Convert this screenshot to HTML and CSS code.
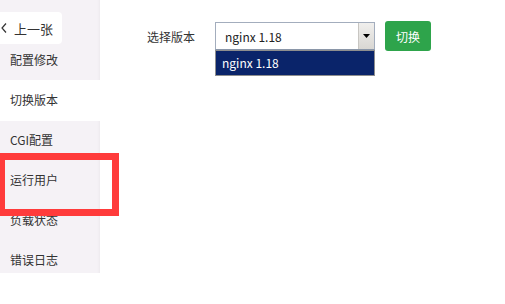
FILE: index.html
```html
<!DOCTYPE html>
<html lang="zh-CN">
<head>
<meta charset="utf-8">
<title>切换版本</title>
<link rel="stylesheet" href="styles.css">
</head>
<body>
<div class="page">
  <nav class="sidebar">
    <div class="nav-item">配置修改</div>
    <div class="nav-item active">切换版本</div>
    <div class="nav-item">CGI配置</div>
    <div class="nav-item">运行用户</div>
    <div class="nav-item">负载状态</div>
    <div class="nav-item">错误日志</div>
  </nav>
  <main class="main">
    <div class="form-row">
      <span class="label">选择版本</span>
      <div class="select">
        <span class="select-value">nginx 1.18</span>
        <span class="select-arrow">
          <svg width="7" height="4" viewBox="0 0 7 4"><polygon points="0,0 7,0 3.5,4" fill="#000"/></svg>
        </span>
        <ul class="select-list">
          <li class="select-option selected">nginx 1.18</li>
        </ul>
      </div>
      <button class="btn-switch">切换</button>
    </div>
  </main>
  <a class="prev-btn">
    <svg class="chev" width="6" height="10" viewBox="0 0 6 10"><polyline points="5,0.5 1,5 5,9.5" fill="none" stroke="#333" stroke-width="1.2"/></svg>
    <span>上一张</span>
  </a>
  <div class="highlight-box"></div>
</div>
</body>
</html>
```
FILE: styles.css
```css
* { box-sizing: border-box; }
html, body {
  margin: 0;
  padding: 0;
  background: #fff;
}
body {
  font-family: "Noto Sans CJK SC", "Noto Sans", "Liberation Sans", sans-serif;
  font-size: 12px;
  color: #333;
  width: 505px;
  height: 304px;
  overflow: hidden;
}
.page {
  position: relative;
  display: flex;
  align-items: flex-start;
  height: 304px;
}
.sidebar {
  width: 100px;
  height: 273px;
  flex: 0 0 100px;
  background: #f5f2f6;
  padding-top: 40px;
  box-shadow: inset -3px 0 3px -2px rgba(0,0,0,0.04);
}
.nav-item {
  height: 40px;
  line-height: 40px;
  padding-left: 10px;
  font-size: 12px;
  color: #333;
  white-space: nowrap;
}
.nav-item.active {
  background: #fff;
  height: 41px;
  margin-bottom: -1px;
}
.main {
  flex: 1;
  padding: 21px 0 0 47px;
}
.form-row {
  display: flex;
  align-items: center;
  height: 30px;
}
.label {
  font-size: 12px;
  color: #333;
  margin-right: 20px;
  line-height: 1;
  padding-top: 2px;
}
.select {
  position: relative;
  width: 160px;
  height: 28px;
  border: 1px solid #a3adbd;
  border-bottom-color: #8a96a8;
  background: #fff;
  display: flex;
  align-items: center;
}
.select-value {
  flex: 1;
  padding-left: 9px;
  font-size: 12px;
  color: #222;
}
.select-arrow {
  width: 16px;
  height: 26px;
  background: linear-gradient(#f0efed, #d9d7d3);
  border-left: 1px solid #c8c6c2;
  display: flex;
  align-items: center;
  justify-content: center;
}
.select-list {
  position: absolute;
  left: -1px;
  top: 27px;
  width: 160px;
  margin: 0;
  padding: 0;
  list-style: none;
  border: 1px solid #8e8e8e;
  background: #fff;
}
.select-option {
  height: 24px;
  line-height: 24px;
  padding-left: 6px;
  font-size: 12px;
}
.select-option.selected {
  background: #0a246a;
  color: #fff;
}
.btn-switch {
  margin-left: 10px;
  width: 46px;
  height: 30px;
  border: none;
  border-radius: 3px;
  background: #2ea44b;
  color: #fff;
  font-family: inherit;
  font-size: 12px;
  padding: 0;
  cursor: pointer;
}
.prev-btn {
  position: absolute;
  left: 0;
  top: 12px;
  width: 62px;
  height: 32px;
  background: #fff;
  border-radius: 0 4px 4px 0;
  display: flex;
  align-items: center;
  gap: 7px;
  padding-left: 1px;
  font-size: 13px;
  color: #333;
}
.chev { flex: 0 0 auto; }
.highlight-box {
  position: absolute;
  left: -2px;
  top: 153px;
  width: 121px;
  height: 63px;
  border: 7px solid #ff3b3b;
}
```
